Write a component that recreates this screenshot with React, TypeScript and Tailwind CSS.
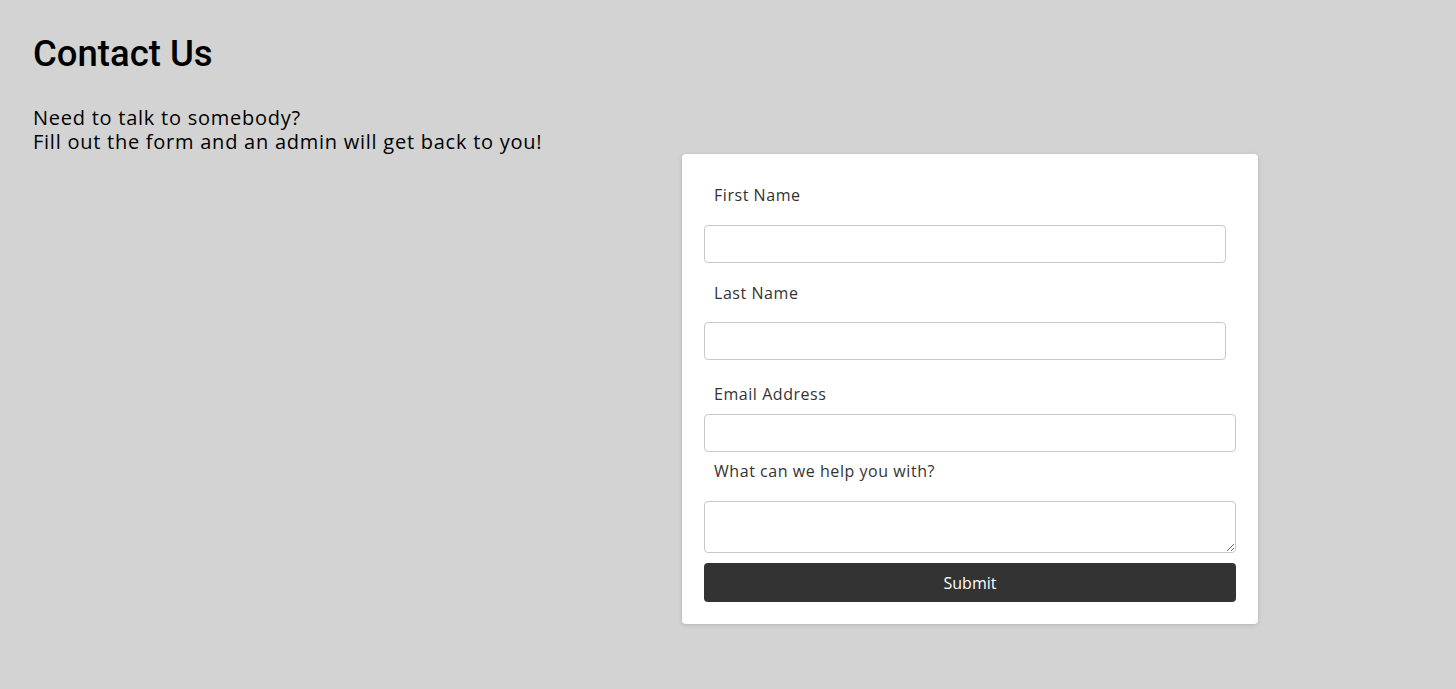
import React from 'react';

const labelCls = "block text-[16px] leading-[20px] tracking-[0.55px] text-[#333] pl-[10px] font-['Open_Sans',sans-serif]";
const inputCls = "block h-[38px] rounded-[4px] border border-[#c8c8c8] bg-white outline-none";

export default function App() {
  return (
    <div className="min-h-[689px] bg-[#d3d3d3] px-[33px] pt-[32px] pb-[64px] font-['Open_Sans',sans-serif] text-black">
      <h1 className="font-['Roboto',sans-serif] text-[36.5px] leading-[44px] font-medium">Contact Us</h1>
      <p className="mt-[30px] text-[20px] leading-[24px] tracking-[0.75px]">
        Need to talk to somebody?
        <br />
        Fill out the form and an admin will get back to you!
      </p>

      <form className="ml-[649px] w-[576px] rounded-[4px] bg-white px-[22px] pt-[31px] pb-[22px] shadow-[0_1px_4px_rgba(0,0,0,0.15)]">
        <label className={labelCls}>First Name</label>
        <input className={`${inputCls} mt-[20px] w-[522px]`} />

        <label className={`${labelCls} mt-[20px]`}>Last Name</label>
        <input className={`${inputCls} mt-[19px] w-[522px]`} />

        <label className={`${labelCls} mt-[24px]`}>Email Address</label>
        <input className={`${inputCls} mt-[10px] w-full`} />

        <label className={`${labelCls} mt-[9px]`}>What can we help you with?</label>
        <textarea className="mt-[20px] block h-[52px] w-full rounded-[4px] border border-[#c8c8c8] bg-white outline-none" />

        <button
          type="button"
          className="mt-[10px] block h-[39px] w-full rounded-[4px] bg-[#333] text-[16px] text-white font-['Open_Sans',sans-serif]"
        >
          Submit
        </button>
      </form>
    </div>
  );
}
